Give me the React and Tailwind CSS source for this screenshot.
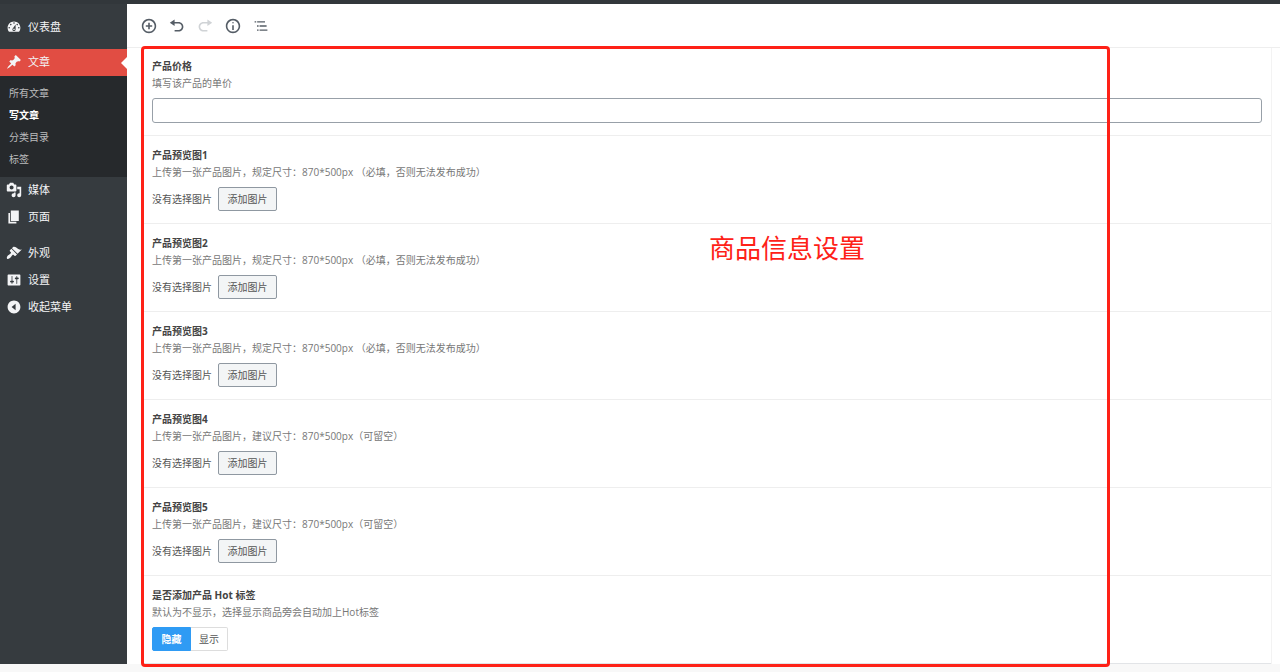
import React, { useState } from 'react';
import clsx from 'clsx';

const ICONS = {
    dashboard: "M3.76 16h12.48c1.1-1.37 1.76-3.11 1.76-5 0-4.42-3.58-8-8-8s-8 3.58-8 8c0 1.89.66 3.63 1.76 5zM10 4c.55 0 1 .45 1 1s-.45 1-1 1-1-.45-1-1 .45-1 1-1zM6 6c.55 0 1 .45 1 1s-.45 1-1 1-1-.45-1-1 .45-1 1-1zm8 0c.55 0 1 .45 1 1s-.45 1-1 1-1-.45-1-1 .45-1 1-1zm-5.37 5.55L12 7v6c0 1.1-.9 2-2 2s-2-.9-2-2c0-.57.24-1.08.63-1.45zM4 10c.55 0 1 .45 1 1s-.45 1-1 1-1-.45-1-1 .45-1 1-1zm12 0c.55 0 1 .45 1 1s-.45 1-1 1-1-.45-1-1 .45-1 1-1zm-5 3c0-.55-.45-1-1-1s-1 .45-1 1 .45 1 1 1 1-.45 1-1z",
    post: "M10.44 3.02l1.82-1.82 6.36 6.35-1.83 1.82c-1.05-.68-2.48-.57-3.41.36l-.75.75c-.92.93-1.04 2.35-.35 3.41l-1.83 1.82-2.41-2.41-2.8 2.79c-.42.42-3.38 2.71-3.8 2.29s1.86-3.39 2.28-3.81l2.79-2.79L4.1 9.36l1.83-1.82c1.05.69 2.48.57 3.4-.36l.75-.75c.93-.92 1.05-2.35.36-3.41z",
    media: "M13 11V4c0-.55-.45-1-1-1h-1.67L9 1H5L3.67 3H2c-.55 0-1 .45-1 1v7c0 .55.45 1 1 1h10c.55 0 1-.45 1-1zM7 4.5c1.38 0 2.5 1.12 2.5 2.5S8.38 9.5 7 9.5 4.5 8.38 4.5 7 5.62 4.5 7 4.5zM14 6h5v10.5c0 1.38-1.12 2.5-2.5 2.5S14 17.88 14 16.5s1.12-2.5 2.5-2.5c.17 0 .34.02.5.05V9h-3V6zm-4 8.05V13h2v3.5c0 1.38-1.12 2.5-2.5 2.5S7 17.88 7 16.5 8.12 14 9.5 14c.17 0 .34.02.5.05z",
    page: "M6 15V2h10v13H6zm-1 1h8v2H3V5h2v11z",
    appearance: "M14.48 11.06L7.41 3.99l1.5-1.5c.5-.56 2.3-.47 3.51.32 1.21.8 1.43 1.28 2.91 2.1 1.18.64 2.45 1.26 4.45.85zm-.71.71L6.7 4.7 4.93 6.47c-.39.39-.39 1.02 0 1.41l1.06 1.06c.39.39.39 1.03 0 1.42-.6.6-1.43 1.11-2.21 1.69-.35.26-.7.53-1.01.84C1.43 14.23.4 16.08 1.4 17.07c.99 1 2.84-.03 4.18-1.36.31-.31.58-.66.85-1.02.57-.78 1.08-1.61 1.69-2.21.39-.39 1.02-.39 1.41 0l1.06 1.06c.39.39 1.02.39 1.41 0z",
    settings: "M18 16V4c0-.55-.45-1-1-1H3c-.55 0-1 .45-1 1v12c0 .55.45 1 1 1h14c.55 0 1-.45 1-1zM8 11h1c.55 0 1 .45 1 1s-.45 1-1 1H8v1.5c0 .28-.22.5-.5.5s-.5-.22-.5-.5V13H6c-.55 0-1-.45-1-1s.45-1 1-1h1V5.5c0-.28.22-.5.5-.5s.5.22.5.5V11zm5-2h-1c-.55 0-1-.45-1-1s.45-1 1-1h1V5.5c0-.28.22-.5.5-.5s.5.22.5.5V7h1c.55 0 1 .45 1 1s-.45 1-1 1h-1v5.5c0 .28-.22.5-.5.5s-.5-.22-.5-.5V9z",
    collapse: "M10 2c4.42 0 8 3.58 8 8s-3.58 8-8 8-8-3.58-8-8 3.58-8 8-8zm2 12V6l-5 4z",
    insert: "M10 1c-5 0-9 4-9 9s4 9 9 9 9-4 9-9-4-9-9-9zm0 16c-3.9 0-7-3.1-7-7s3.1-7 7-7 7 3.1 7 7-3.1 7-7 7zm1-11H9v3H6v2h3v3h2v-3h3V9h-3V6z",
    undo: "M12 5H7V2L1 6l6 4V7h5c2.2 0 4 1.8 4 4s-1.8 4-4 4H7v2h5c3.3 0 6-2.7 6-6s-2.7-6-6-6z",
    redo: "M8 5h5V2l6 4-6 4V7H8c-2.2 0-4 1.8-4 4s1.8 4 4 4h5v2H8c-3.3 0-6-2.7-6-6s2.7-6 6-6z",
    info: "M9 15h2V9H9v6zm1-10c-.5 0-1 .5-1 1s.5 1 1 1 1-.5 1-1-.5-1-1-1zm0-4c-5 0-9 4-9 9s4 9 9 9 9-4 9-9-4-9-9-9zm0 16c-3.9 0-7-3.1-7-7s3.1-7 7-7 7 3.1 7 7-3.1 7-7 7z",
    outline: "M2 4h2v1.6H2V4zm3.2 0H15v1.6H5.200V4zM5 9.200h2v1.600H5V9.200zm3.200 0H17v1.600H8.200V9.200zM5 14.400h2V16H5v-1.600zm3.200 0H18V16H8.200v-1.600z"
};

const SUBMENU = ["所有文章", "写文章", "分类目录", "标签"];

const TOOLS = [
    { icon: "insert", label: "添加区块" },
    { icon: "undo", label: "撤销" },
    { icon: "redo", label: "重做", disabled: true },
    { icon: "info", label: "内容结构" },
    { icon: "outline", label: "区块导航" }
];

const REQUIRED = "上传第一张产品图片，规定尺寸：870*500px （必填，否则无法发布成功）";
const OPTIONAL = "上传第一张产品图片，建议尺寸：870*500px（可留空）";

const PREVIEWS = [
    { id: 1, hint: REQUIRED },
    { id: 2, hint: REQUIRED },
    { id: 3, hint: REQUIRED },
    { id: 4, hint: OPTIONAL },
    { id: 5, hint: OPTIONAL }
];

const Icon = ({ name, className }) => (
    <svg viewBox="0 0 20 20" className={clsx("w-4 h-4 shrink-0 fill-current", className)} aria-hidden="true">
        <path d={ICONS[name]} />
    </svg>
);

const MenuLink = ({ icon, children }) => (
    <a href="#" className="flex items-center h-[27px] pl-1.5 gap-1.5 text-[11px] text-gray-100">
        <Icon name={icon} className="mb-px" />
        {children}
    </a>
);

const Sidebar = () => (
    <nav className="w-[127px] shrink-0 bg-[#363b3f] pt-2.5">
        <MenuLink icon="dashboard">仪表盘</MenuLink>

        <div className="relative mt-2 bg-[#e14d43]">
            <MenuLink icon="post">文章</MenuLink>
            <span className="absolute right-0 top-1/2 -translate-y-1/2 border-y-6 border-r-6 border-y-transparent border-r-white" />
        </div>
        <ul className="bg-[#26292c] pt-1.5 pb-[7px]">
            {SUBMENU.map(item => (
                <li key={item}>
                    <a
                        href="#"
                        className={clsx(
                            "block pl-[9px] text-[10px] leading-[22px]",
                            item === "写文章" ? "font-bold text-white" : "text-[#bbbcbd]"
                        )}
                    >
                        {item}
                    </a>
                </li>
            ))}
        </ul>

        <MenuLink icon="media">媒体</MenuLink>
        <MenuLink icon="page">页面</MenuLink>
        <div className="h-[9px]" />
        <MenuLink icon="appearance">外观</MenuLink>
        <MenuLink icon="settings">设置</MenuLink>
        <button type="button" className="flex items-center h-[27px] pl-1.5 gap-1.5 text-[11px] text-gray-100">
            <Icon name="collapse" className="mb-px" />
            收起菜单
        </button>
    </nav>
);

const Toolbar = () => (
    <div className="flex items-center gap-3 h-11 pl-3.5 border-b border-[#eeeeee] text-[#555d66]">
        {TOOLS.map(tool => (
            <button
                key={tool.icon}
                type="button"
                aria-label={tool.label}
                disabled={tool.disabled}
                className="disabled:text-[#d0d3d6]"
            >
                <Icon name={tool.icon} />
            </button>
        ))}
    </div>
);

const ImageField = ({ id, hint }) => (
    <section className="pt-2.5 pb-3 pl-2 pr-[9px] border-b border-[#eeeeee]">
        <h3 className="font-bold leading-[18px] text-[#444444]">产品预览图{id}</h3>
        <p className="leading-[17px] text-[#777777]">{hint}</p>
        <div className="flex items-center gap-1 mt-1.5 text-[#555555]">
            <span className="min-w-[62px]">没有选择图片</span>
            <button type="button" className="h-6 w-[59px] rounded-xs border border-[#8f98a1] bg-[#f3f5f6]">
                添加图片
            </button>
        </div>
    </section>
);

const HotField = () => {
    const [value, setValue] = useState("hide");

    return (
        <section className="pt-2.5 pb-3 pl-2 border-b border-[#e2e4e7]">
            <h3 className="font-bold leading-[18px] text-[#444444]">是否添加产品 Hot 标签</h3>
            <p className="leading-[17px] text-[#777777]">默认为不显示，选择显示商品旁会自动加上Hot标签</p>
            <div className="flex mt-1.5">
                <button
                    type="button"
                    onClick={() => setValue("hide")}
                    className={clsx(
                        "h-6 w-[39px] rounded-l-xs border",
                        value === "hide" ? "bg-[#2f9bf4] border-[#2f9bf4] font-bold text-white" : "border-[#dddddd] text-[#555555]"
                    )}
                >
                    隐藏
                </button>
                <button
                    type="button"
                    onClick={() => setValue("show")}
                    className={clsx(
                        "h-6 w-[37px] rounded-r-xs border border-l-0",
                        value === "show" ? "bg-[#2f9bf4] border-[#2f9bf4] font-bold text-white" : "border-[#dddddd] text-[#555555]"
                    )}
                >
                    显示
                </button>
            </div>
        </section>
    );
};

const App = () => {
    return (
        <div className="min-h-screen bg-[#f8f8f8] pb-2 font-['Open_Sans','Noto_Sans_CJK_SC',sans-serif]">
            <div className="h-1 bg-[#32373b]" />
            <div className="flex">
                <Sidebar />
                <main className="relative flex-1 min-w-0 bg-white">
                    <Toolbar />
                    <div className="ml-4 mr-2 border-x border-[#f3f3f3] text-[10px]">
                        <section className="pt-[9px] pb-3 pl-2 pr-[9px] border-b border-[#eeeeee]">
                            <label htmlFor="price" className="block font-bold leading-[18px] text-[#444444]">产品价格</label>
                            <p className="leading-[17px] text-[#777777]">填写该产品的单价</p>
                            <input
                                id="price"
                                type="text"
                                className="block w-full h-[25px] mt-1.5 px-2 rounded-[3px] border border-[#98a0a8]"
                            />
                        </section>
                        {PREVIEWS.map(item => (
                            <ImageField key={item.id} id={item.id} hint={item.hint} />
                        ))}
                        <HotField />
                    </div>

                    {/* highlight frame and caption over the form */}
                    <div className="absolute left-[14px] top-[42px] -bottom-[3px] w-[969px] rounded border-3 border-[#fe2117] pointer-events-none">
                        <p className="absolute left-[565px] top-[181px] text-[26px] leading-9 whitespace-nowrap text-[#fe2117]">
                            商品信息设置
                        </p>
                    </div>
                </main>
            </div>
        </div>
    );
};

export default App;
